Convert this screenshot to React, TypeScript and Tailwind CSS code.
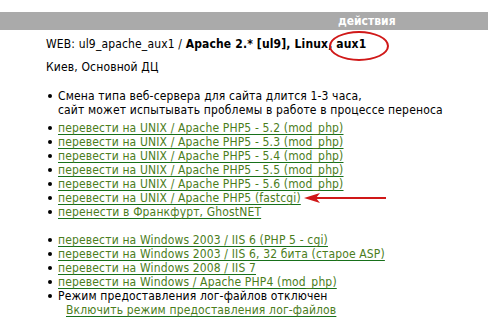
const unixLinks = [
  'перевести на UNIX / Apache PHP5 - 5.2 (mod_php)',
  'перевести на UNIX / Apache PHP5 - 5.3 (mod_php)',
  'перевести на UNIX / Apache PHP5 - 5.4 (mod_php)',
  'перевести на UNIX / Apache PHP5 - 5.5 (mod_php)',
  'перевести на UNIX / Apache PHP5 - 5.6 (mod_php)',
  'перевести на UNIX / Apache PHP5 (fastcgi)',
  'перенести в Франкфурт, GhostNET'
];

const winLinks = [
  'перевести на Windows 2003 / IIS 6 (PHP 5 - cgi)',
  'перевести на Windows 2003 / IIS 6, 32 бита (старое ASP)',
  'перевести на Windows 2008 / IIS 7',
  'перевести на Windows / Apache PHP4 (mod_php)'
];

const Bullet = () => <span className="mr-[6px] inline-block h-[4px] w-[4px] shrink-0 rounded-full bg-black" />;

const Link = ({ children }: { children: string }) => (
  <a href="#" className="text-[#4b7d1c] underline decoration-[#17701a] underline-offset-[2px]">
    {children}
  </a>
);

export default function App() {
  return (
    <div
      className="relative h-[329px] w-[488px] overflow-hidden bg-white text-[12px] leading-[14px] tracking-[0.15px] text-black"
      style={{ fontFamily: '"DejaVu Sans Condensed", Tahoma, "DejaVu Sans", sans-serif' }}
    >
      <div className="mt-[12px] flex h-[18px] items-center bg-[#aaaaaa] pl-[338px] text-[12px] font-bold tracking-normal text-white">
        действия
      </div>

      <div className="pl-[46px]">
        <div className="mt-[7px]">
          WEB: ul9_apache_aux1 / <b>Apache 2.* [ul9], Linux, aux1</b>
        </div>
        <div className="mt-[9px]">Киев, Основной ДЦ</div>

        <ul className="mt-[15px] pl-[2px]">
          <li className="flex items-center">
            <Bullet />
            Смена типа веб-сервера для сайта длится 1-3 часа,
          </li>
          <li className="pl-[10px]">сайт может испытывать проблемы в работе в процессе переноса</li>
          <div className="mt-[4px]">
            {unixLinks.map((l) => (
              <li key={l} className="flex items-center">
                <Bullet />
                <Link>{l}</Link>
              </li>
            ))}
          </div>
          <div className="mt-[14px]">
            {winLinks.map((l) => (
              <li key={l} className="flex items-center">
                <Bullet />
                <Link>{l}</Link>
              </li>
            ))}
          </div>
          <li className="flex items-center">
            <Bullet />
            Режим предоставления лог-файлов отключен
          </li>
          <li className="pl-[18px]">
            <Link>Включить режим предоставления лог-файлов</Link>
          </li>
        </ul>
      </div>

      {/* red annotations */}
      <div className="absolute left-[329px] top-[31px] h-[30px] w-[60px] rounded-[50%] border-[2px] border-[#d01818]" />
      <svg className="absolute left-[300px] top-[190px]" width="90" height="16" viewBox="0 0 90 16">
        <line x1="14" y1="8" x2="86" y2="8" stroke="#d01818" strokeWidth="2" />
        <path d="M4 8 L20 3 L16 8 L20 13 Z" fill="#d01818" />
      </svg>
    </div>
  );
}
